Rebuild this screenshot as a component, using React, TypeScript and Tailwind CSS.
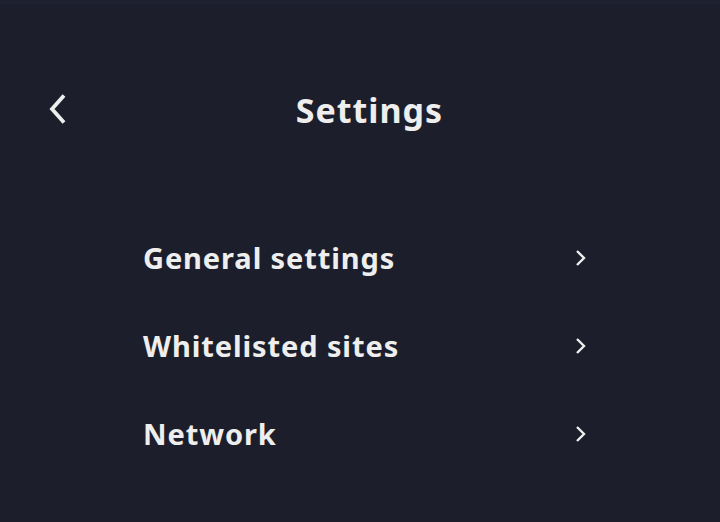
import React from "react";

export default function App() {
  const items = ["General settings", "Whitelisted sites", "Network"];
  return (
    <div className="w-[720px] h-[522px] bg-[#1c1f2b] text-[#eeeeee] overflow-hidden" style={{ fontFamily: '"Noto Sans", sans-serif' }}>
      <div className="h-[4px] bg-[#1e2230]" />
      <div className="relative h-[210px] flex items-start">
        <div className="absolute left-[45px] top-[88px] w-[26px] h-[34px]">
          <svg width="26" height="34" viewBox="0 0 26 34" fill="none" stroke="currentColor" strokeWidth={3.8}>
            <path d="M19 3.5L7 17 19 30.5" />
          </svg>
        </div>
        <h1 className="w-full text-center pl-[19px] mt-[82px] text-[34px] font-bold leading-[48px] tracking-[1px]">Settings</h1>
      </div>
      <div className="flex flex-col pl-[143px] pr-[128px]">
        {items.map((t) => (
          <div key={t} className="h-[88px] flex items-center justify-between">
            <span className="text-[29px] font-bold tracking-[0.9px]">{t}</span>
            <svg width="18" height="20" viewBox="0 0 18 20" fill="none" stroke="currentColor" strokeWidth={2.4}>
              <path d="M3 3l7 7-7 7" />
            </svg>
          </div>
        ))}
      </div>
    </div>
  );
}
